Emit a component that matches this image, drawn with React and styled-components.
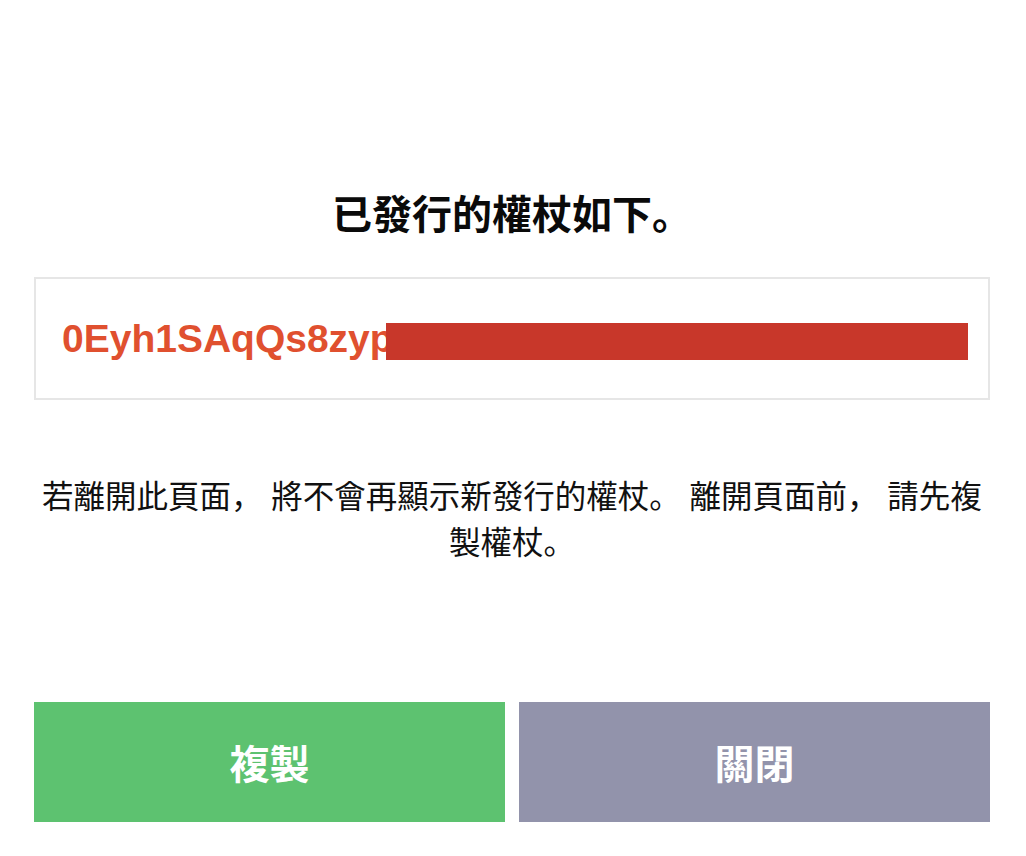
import React from "react";
import styled, { createGlobalStyle } from "styled-components";

const Global = createGlobalStyle`
  html, body { margin: 0; padding: 0; background: #ffffff; }
  body { font-family: "Liberation Sans", "Noto Sans CJK JP", sans-serif; }
`;

const Page = styled.main`
  width: 956px;
  margin-left: 34px;
  padding-top: 188px;
  display: flex;
  flex-direction: column;
`;

const Title = styled.h1`
  margin: 0;
  text-align: center;
  font-family: "Liberation Sans", "Noto Sans CJK JP", sans-serif;
  font-size: 40px;
  line-height: 54px;
  font-weight: 700;
  color: #0a0a0a;
`;

const TokenBox = styled.div`
  position: relative;
  margin-top: 35px;
  height: 123px;
  box-sizing: border-box;
  border: 2px solid #e6e6e6;
  display: flex;
  align-items: center;
  padding: 0 24px 0 26px;
`;

const Token = styled.span`
  font-family: "Liberation Sans", Arial, sans-serif;
  font-weight: 700;
  font-size: 39px;
  color: #e0502f;
  white-space: nowrap;
  overflow: hidden;
`;

const Redaction = styled.span`
  position: absolute;
  left: 350px;
  right: 20px;
  top: 44px;
  height: 37px;
  background: #c8372a;
`;

const Notice = styled.p`
  margin: 74px 0 0;
  text-align: center;
  font-family: "Liberation Sans", "Noto Sans CJK JP", sans-serif;
  font-size: 31.5px;
  line-height: 46px;
  color: #111111;
`;

const Actions = styled.div`
  margin-top: 136px;
  display: grid;
  grid-template-columns: 1fr 1fr;
  gap: 14px;
`;

const ActionButton = styled.button`
  height: 120px;
  border: none;
  border-radius: 0;
  background: ${(p) => (p.$tone === "green" ? "#5dc270" : "#9293ab")};
  color: #ffffff;
  font-family: "Liberation Sans", "Noto Sans CJK JP", sans-serif;
  font-size: 40px;
  font-weight: 700;
  cursor: pointer;
  padding: 0;
`;

export default function App() {
  return (
    <>
      <Global />
      <Page>
        <Title>已發行的權杖如下。</Title>
        <TokenBox>
          <Token>0Eyh1SAqQs8zyp</Token>
          <Redaction />
        </TokenBox>
        <Notice>若離開此頁面， 將不會再顯示新發行的權杖。 離開頁面前， 請先複製權杖。</Notice>
        <Actions>
          <ActionButton $tone="green">複製</ActionButton>
          <ActionButton $tone="gray">關閉</ActionButton>
        </Actions>
      </Page>
    </>
  );
}
